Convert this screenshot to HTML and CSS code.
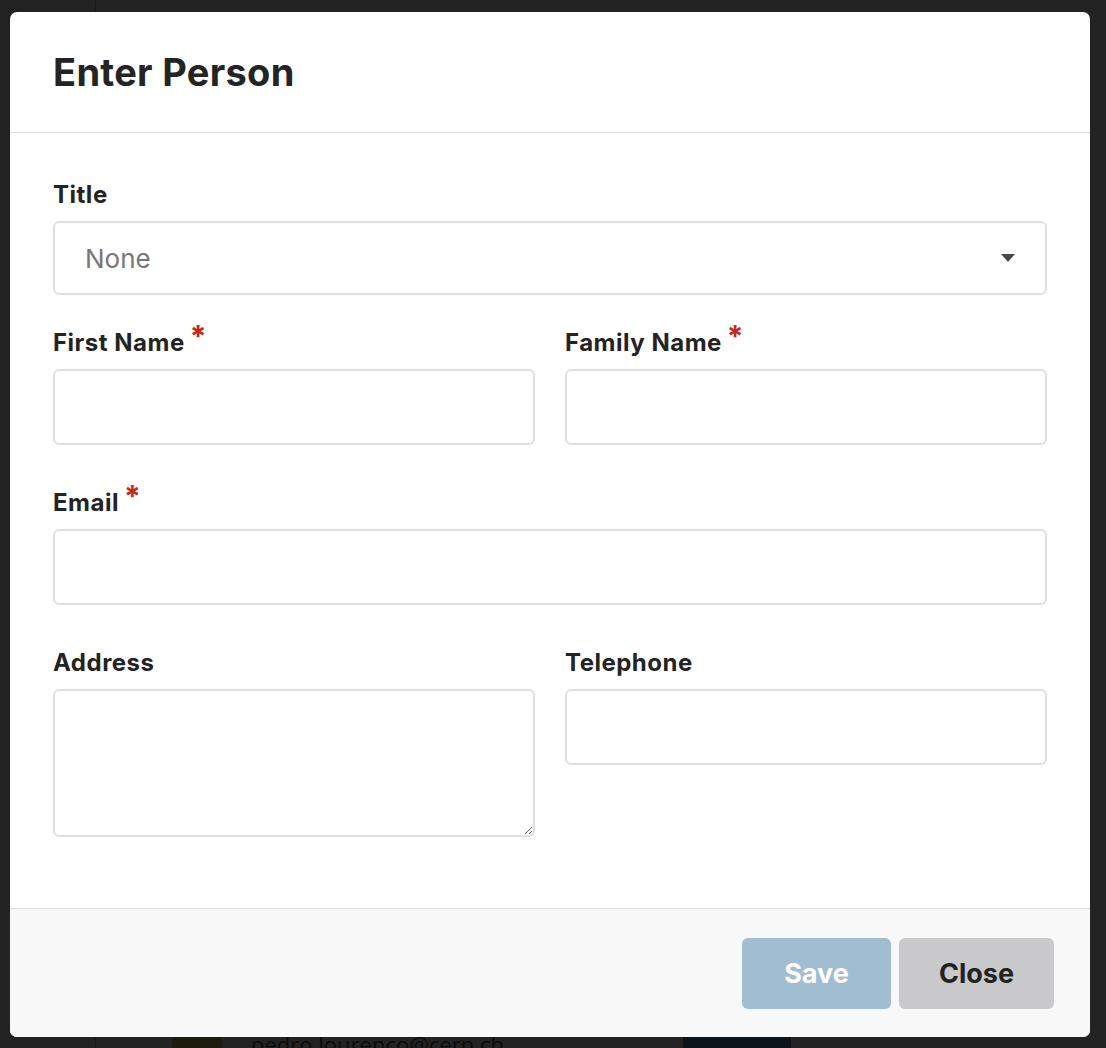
FILE: index.html
```html
<!DOCTYPE html>
<html lang="en">
<head>
<meta charset="utf-8">
<title>Enter Person</title>
<link rel="stylesheet" href="styles.css">
</head>
<body>
<div class="page">
  <aside class="sidebar"></aside>
  <main class="main">
    <div class="row">
      <span class="avatar"></span>
      <span class="row-email">pedro.lourenco@cern.ch</span>
      <span class="row-btn"></span>
    </div>
  </main>
</div>

<div class="modal">
  <header class="modal-head">
    <h1 class="modal-title">Enter Person</h1>
  </header>
  <section class="modal-body">
    <div class="field field-title">
      <label class="label">Title</label>
      <div class="select">
        <select class="select-input">
          <option>None</option>
        </select>
        <svg class="caret" width="14" height="8" viewBox="0 0 14 8"><path d="M0 0H14L7 8Z" fill="#484848"/></svg>
      </div>
    </div>
    <div class="cols">
      <div class="field">
        <label class="label">First Name<span class="req">*</span></label>
        <input class="input" type="text">
      </div>
      <div class="field">
        <label class="label">Family Name<span class="req">*</span></label>
        <input class="input" type="text">
      </div>
    </div>
    <div class="field">
      <label class="label">Email<span class="req">*</span></label>
      <input class="input" type="text">
    </div>
    <div class="cols">
      <div class="field">
        <label class="label">Address</label>
        <textarea class="textarea"></textarea>
      </div>
      <div class="field">
        <label class="label">Telephone</label>
        <input class="input" type="text">
      </div>
    </div>
  </section>
  <footer class="modal-foot">
    <button class="btn btn-save" type="button">Save</button>
    <button class="btn btn-close" type="button">Close</button>
  </footer>
</div>
</body>
</html>
```

FILE: styles.css
```css
* { box-sizing: border-box; }

html, body {
  margin: 0;
  height: 100%;
}

body {
  background: #232323;
  font-family: Inter, "Liberation Sans", sans-serif;
  overflow: hidden;
}

.page {
  display: grid;
  grid-template-columns: 96px 1fr;
  height: 1048px;
}

.sidebar {
  background: #222222;
  border-right: 1px solid #1b1b1b;
}

.main {
  display: flex;
  flex-direction: column;
  justify-content: flex-end;
}

.row {
  display: flex;
  align-items: center;
  gap: 29px;
  height: 40px;
  margin-bottom: -16px;
  padding-left: 76px;
}

.avatar {
  width: 50px;
  height: 50px;
  border-radius: 50%;
  background: #1d1c0c;
  flex: none;
}

.row-email {
  font-family: "Open Sans", sans-serif;
  font-size: 22px;
  color: #0b0b0b;
  width: 403px;
  flex: none;
}

.row-btn {
  width: 108px;
  height: 40px;
  border-radius: 5px;
  background: #0b141a;
  flex: none;
}

.modal {
  position: absolute;
  left: 10px;
  top: 12px;
  width: 1080px;
  height: 1025px;
  background: #ffffff;
  border-radius: 7px;
  overflow: hidden;
  display: flex;
  flex-direction: column;
}

.modal-head {
  height: 121px;
  border-bottom: 1px solid #dcdcdc;
  display: flex;
  align-items: center;
  padding: 0 43px;
  flex: none;
}

.modal-title {
  margin: 0;
  font-size: 38px;
  font-weight: 700;
  color: #242424;
  letter-spacing: 0.3px;
}

.modal-body {
  flex: 1;
  padding: 44px 43px 0 43px;
}

.field {
  margin-bottom: 40px;
  display: flex;
  flex-direction: column;
}

.field-title {
  margin-bottom: 30px;
}

.cols {
  display: grid;
  grid-template-columns: 1fr 1fr;
  gap: 30px;
  align-items: start;
}

.label {
  display: block;
  font-size: 24px;
  font-weight: 700;
  color: #232323;
  line-height: 36px;
  height: 36px;
  margin-bottom: 8px;
  letter-spacing: 0.5px;
  white-space: nowrap;
}

.req {
  color: #c7261c;
  font-size: 30px;
  line-height: 0;
  margin-left: 5px;
  vertical-align: 4px;
  letter-spacing: 0;
}

.input,
.select,
.textarea {
  margin: 0;
  width: 100%;
  border: 2px solid #dfdfdf;
  border-radius: 6px;
  background: #ffffff;
  font-family: inherit;
  font-size: 26px;
}

.input {
  height: 76px;
  padding: 0 30px;
}

.textarea {
  height: 148px;
  padding: 16px 30px;
  resize: vertical;
  display: block;
}

.select {
  height: 74px;
  display: flex;
  align-items: center;
  padding: 0 30px;
}

.select-input {
  flex: 1;
  appearance: none;
  -webkit-appearance: none;
  border: none;
  background: transparent;
  font-family: inherit;
  font-size: 26px;
  color: #777777;
  outline: none;
  padding: 0;
  margin: 0;
}

.caret {
  display: block;
}

.modal-foot {
  height: 129px;
  border-top: 1px solid #dcdcdc;
  background: #f8f8f8;
  display: flex;
  justify-content: flex-end;
  align-items: center;
  gap: 8px;
  padding: 0 36px;
  flex: none;
}

.btn {
  height: 71px;
  border: none;
  border-radius: 6px;
  padding: 0 42px;
  margin: 0;
  font-family: inherit;
  font-size: 27px;
  font-weight: 700;
  cursor: pointer;
}

.btn-save {
  background: #a0bdd1;
  color: #ffffff;
  width: 149px;
}

.btn-close {
  background: #c9c9cb;
  color: #222222;
  width: 155px;
  padding: 0;
}
```
